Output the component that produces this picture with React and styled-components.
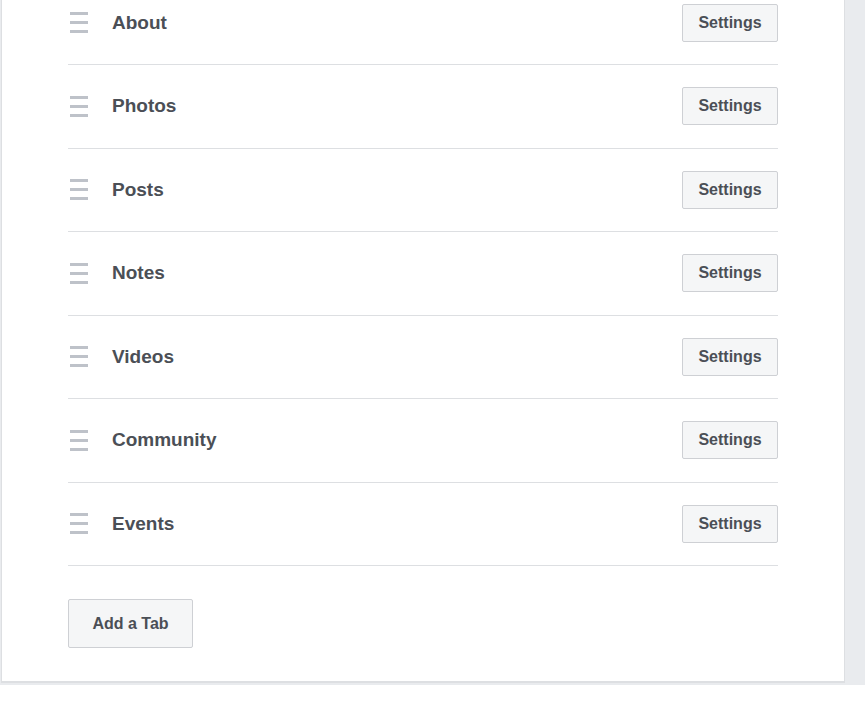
import React from "react";
import styled, { createGlobalStyle } from "styled-components";

const tabs = ["About", "Photos", "Posts", "Notes", "Videos", "Community", "Events"];

const GlobalStyle = createGlobalStyle`
  html, body {
    margin: 0;
    padding: 0;
    background: #fff;
    font-family: "Liberation Sans", Arial, sans-serif;
  }
`;

const Page = () => (
  <>
    <GlobalStyle />
    <StPage>
      <Card>
        <TabList>
          {tabs.map((name) => (
            <TabRow key={name}>
              <Handle>
                <span />
                <span />
                <span />
              </Handle>
              <TabName>{name}</TabName>
              <Button>Settings</Button>
            </TabRow>
          ))}
        </TabList>
        <AddButton>Add a Tab</AddButton>
      </Card>
    </StPage>
  </>
);

const StPage = styled.div`
  width: 865px;
  height: 685px;
  background: #e9ebee;
  padding-left: 1px;
  box-sizing: border-box;
  overflow: hidden;
`;

const Card = styled.div`
  width: 844px;
  height: 683px;
  box-sizing: border-box;
  background: #fff;
  border: 1px solid #dddfe2;
  border-top: none;
  border-bottom: 2px solid #dddfe2;
  padding: 0 66px 0 66px;
  display: flex;
  flex-direction: column;
  align-items: flex-start;
`;

const TabList = styled.div`
  width: 100%;
  margin-top: -18.5px;
  display: flex;
  flex-direction: column;
`;

const TabRow = styled.div`
  height: 83.5px;
  box-sizing: border-box;
  border-bottom: 1px solid #dddfe2;
  display: flex;
  align-items: center;
  padding-left: 2px;
`;

const Handle = styled.div`
  width: 18px;
  display: flex;
  flex-direction: column;
  gap: 6px;
  margin-right: 24px;
  span {
    display: block;
    height: 3px;
    background: #bec2c9;
  }
`;

const TabName = styled.div`
  flex: 1;
  font-size: 19px;
  font-weight: 700;
  color: #4b4f56;
`;

const Button = styled.button`
  width: 96px;
  height: 38px;
  box-sizing: border-box;
  border: 1px solid #ced0d4;
  border-radius: 2px;
  background: #f5f6f7;
  color: #4b4f56;
  font-family: "Liberation Sans", Arial, sans-serif;
  font-size: 16px;
  font-weight: 700;
  padding: 0;
  cursor: pointer;
`;

const AddButton = styled(Button)`
  width: 125px;
  height: 49px;
  margin-top: 33px;
`;

export default Page;
